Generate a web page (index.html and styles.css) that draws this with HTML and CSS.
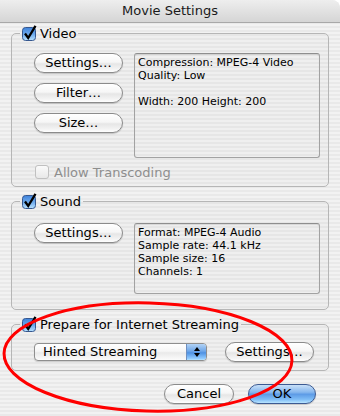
FILE: index.html
```html
<!DOCTYPE html>
<html>
<head>
<meta charset="utf-8">
<title>Movie Settings</title>
<link rel="stylesheet" href="styles.css">
</head>
<body>
<div class="window">
  <div class="titlebar">Movie Settings</div>
  <div class="content">
    <fieldset class="group">
      <legend class="legend">
        <svg class="cb" width="15" height="16" viewBox="0 0 15 16"><defs><linearGradient id="g1" x1="0" y1="0" x2="0" y2="1"><stop offset="0" stop-color="#3f82da"/><stop offset="0.5" stop-color="#6aa8ec"/><stop offset="1" stop-color="#b9e2ff"/></linearGradient></defs><rect x="0.5" y="2.5" width="13" height="13" rx="3" fill="url(#g1)" stroke="#35578f"/><path d="M3 8.5 L6.2 13 L13.5 0.8" fill="none" stroke="#000" stroke-width="2.3" stroke-linejoin="miter"/></svg>
        <span>Video</span>
      </legend>
      <div class="group-body body-video">
        <div class="row">
          <div class="btn-col">
            <button class="btn">Settings…</button>
            <button class="btn">Filter…</button>
            <button class="btn">Size…</button>
          </div>
          <div class="info info-video">Compression: MPEG-4 Video<br>Quality: Low<br><br>Width: 200 Height: 200</div>
        </div>
        <div class="option disabled"><span class="cb-off"></span><span>Allow Transcoding</span></div>
      </div>
    </fieldset>

    <fieldset class="group">
      <legend class="legend">
        <svg class="cb" width="15" height="16" viewBox="0 0 15 16"><defs><linearGradient id="g2" x1="0" y1="0" x2="0" y2="1"><stop offset="0" stop-color="#3f82da"/><stop offset="0.5" stop-color="#6aa8ec"/><stop offset="1" stop-color="#b9e2ff"/></linearGradient></defs><rect x="0.5" y="2.5" width="13" height="13" rx="3" fill="url(#g2)" stroke="#35578f"/><path d="M3 8.5 L6.2 13 L13.5 0.8" fill="none" stroke="#000" stroke-width="2.3"/></svg>
        <span>Sound</span>
      </legend>
      <div class="group-body body-sound">
        <div class="row">
          <div class="btn-col">
            <button class="btn">Settings…</button>
          </div>
          <div class="info info-sound">Format: MPEG-4 Audio<br>Sample rate: 44.1 kHz<br>Sample size: 16<br>Channels: 1</div>
        </div>
      </div>
    </fieldset>

    <fieldset class="group">
      <legend class="legend">
        <svg class="cb" width="15" height="16" viewBox="0 0 15 16"><defs><linearGradient id="g3" x1="0" y1="0" x2="0" y2="1"><stop offset="0" stop-color="#3f82da"/><stop offset="0.5" stop-color="#6aa8ec"/><stop offset="1" stop-color="#b9e2ff"/></linearGradient></defs><rect x="0.5" y="2.5" width="13" height="13" rx="3" fill="url(#g3)" stroke="#35578f"/><path d="M3 8.5 L6.2 13 L13.5 0.8" fill="none" stroke="#000" stroke-width="2.3"/></svg>
        <span>Prepare for Internet Streaming</span>
      </legend>
      <div class="group-body body-stream">
        <div class="stream-row">
          <div class="popup">
            <span class="popup-label">Hinted Streaming</span>
            <span class="popup-arrows"><span class="tri-up"></span><span class="tri-down"></span></span>
          </div>
          <button class="btn">Settings…</button>
        </div>
      </div>
    </fieldset>

    <div class="actions">
      <button class="btn btn-cancel">Cancel</button>
      <button class="btn btn-ok">OK</button>
    </div>
  </div>
  <svg class="annotation" width="340" height="416" viewBox="0 0 340 416"><ellipse cx="148" cy="357" rx="144" ry="54" transform="rotate(1.5 148 357)" fill="none" stroke="#ff0000" stroke-width="3"/></svg>
</div>
</body>
</html>
```

FILE: styles.css
```css
* { box-sizing: border-box; }
html, body { margin: 0; padding: 0; }
body {
  width: 340px;
  height: 416px;
  overflow: hidden;
  background: #ffffff;
  font-family: "DejaVu Sans", "Liberation Sans", sans-serif;
}
.window {
  position: relative;
  width: 340px;
  height: 416px;
  overflow: hidden;
  border-radius: 0 8px 0 0;
  background: repeating-linear-gradient(to bottom, #f2f2f2 0, #f2f2f2 2px, #e9e9e9 2px, #e9e9e9 4px);
  display: flex;
  flex-direction: column;
}
.titlebar {
  flex: none;
  height: 23px;
  background: linear-gradient(#eeeeee, #d5d5d5);
  border-bottom: 1px solid #a8a8a8;
  text-align: center;
  font-size: 13px;
  line-height: 22px;
  color: #1a1a1a;
}
.content {
  padding: 2px 11px 0 11px;
  display: flex;
  flex-direction: column;
}
.group {
  margin: 0;
  padding: 0;
  min-width: 0;
  border: 1px solid #b6b6b6;
  border-radius: 5px;
  background: rgba(0, 0, 0, 0.012);
}
.group + .group { margin-top: 6px; }
.legend {
  margin-left: 8px;
  padding: 0 2px;
  height: 16px;
  display: flex;
  align-items: center;
  gap: 3px;
  font-size: 13px;
  color: #000;
}
.cb { display: block; flex: none; }
.group-body { padding: 12px 8px 7px 22px; }
.body-sound { padding: 14px 8px 15px 22px; }
.body-stream { padding: 10px 8px 8px 22px; }
.row {
  display: flex;
  align-items: flex-start;
  gap: 11px;
}
.btn-col {
  flex: none;
  width: 89px;
  display: flex;
  flex-direction: column;
  gap: 10px;
}
.btn {
  height: 20px;
  width: 89px;
  margin: 0;
  padding: 0;
  border: 1px solid #8b8b8b;
  border-radius: 10px;
  background: linear-gradient(#ffffff 0%, #f6f6f6 45%, #e6e6e6 55%, #f4f4f4 85%, #ffffff 100%);
  box-shadow: 0 1px 1px rgba(0, 0, 0, 0.18);
  font-family: "DejaVu Sans", "Liberation Sans", sans-serif;
  font-size: 13px;
  line-height: 18px;
  color: #000;
  text-align: center;
}
.info {
  flex: 1;
  border: 1px solid #a2a2a2;
  border-top-color: #8e8e8e;
  border-radius: 3px;
  padding: 2px 3px;
  font-size: 11px;
  line-height: 13px;
  color: #000;
  box-shadow: inset 0 1px 1px rgba(0, 0, 0, 0.1);
}
.info-video { height: 105px; }
.info-sound { height: 71px; }
.option {
  margin-top: 7px;
  height: 14px;
  padding-left: 1px;
  display: flex;
  align-items: center;
  gap: 5px;
  font-size: 13px;
}
.disabled { color: #8e8e8e; }
.cb-off {
  flex: none;
  width: 14px;
  height: 14px;
  border: 1px solid #c0c0c0;
  border-radius: 3px;
  background: linear-gradient(#fafafa, #e8e8e8);
}
.stream-row {
  display: flex;
  align-items: center;
  gap: 18px;
}
.popup {
  flex: none;
  width: 173px;
  height: 18px;
  border: 1px solid #8e8e8e;
  border-radius: 4px;
  overflow: hidden;
  display: flex;
  background: linear-gradient(#ffffff 0%, #f6f6f6 45%, #e9e9e9 55%, #fbfbfb 100%);
  box-shadow: 0 1px 1px rgba(0, 0, 0, 0.15);
  font-size: 13px;
  color: #000;
}
.popup-label {
  flex: 1;
  padding-left: 8px;
  line-height: 16px;
}
.popup-arrows {
  flex: none;
  width: 20px;
  border-left: 1px solid #6e8fc0;
  background: linear-gradient(#b2d3f6 0%, #6ea6e8 45%, #4f92e3 55%, #8fcaff 90%, #b8e4ff 100%);
  display: flex;
  flex-direction: column;
  align-items: center;
  justify-content: center;
  gap: 2px;
}
.tri-up {
  width: 0;
  height: 0;
  border-left: 3px solid transparent;
  border-right: 3px solid transparent;
  border-bottom: 4px solid #000;
}
.tri-down {
  width: 0;
  height: 0;
  border-left: 3px solid transparent;
  border-right: 3px solid transparent;
  border-top: 4px solid #000;
}
.actions {
  margin-top: 13px;
  padding-right: 13px;
  display: flex;
  justify-content: flex-end;
  gap: 14px;
}
.btn-cancel { width: 70px; }
.btn-ok {
  width: 68px;
  border-color: #3c5a92;
  background: linear-gradient(#c9e0f8 0%, #86b7ee 40%, #5d9be6 52%, #7fbdf6 80%, #b9e5ff 100%);
}
.annotation {
  position: absolute;
  left: 0;
  top: 0;
  pointer-events: none;
}
```
